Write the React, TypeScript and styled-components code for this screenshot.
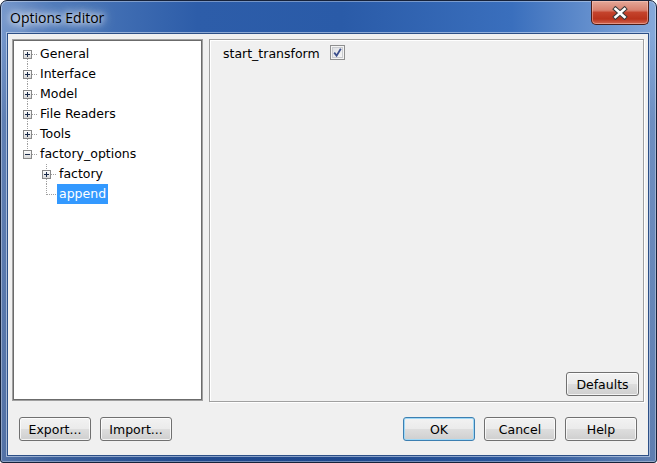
import React from "react";
import styled, { createGlobalStyle } from "styled-components";

const GlobalStyle = createGlobalStyle`
  html, body { margin: 0; padding: 0; background: #ffffff; }
  body { font-family: "DejaVu Sans", Verdana, sans-serif; }
  * { box-sizing: border-box; }
`;

const Window = styled.div`
  width: 657px;
  height: 463px;
  display: flex;
  flex-direction: column;
  border: 1px solid #16223a;
  border-radius: 7px 7px 3px 3px;
  background:
    linear-gradient(to bottom, rgba(8, 30, 80, 0) 0px, rgba(8, 30, 80, 0) 34px, rgba(8, 30, 80, 0.18) 120px, rgba(8, 30, 80, 0.3) 100%),
    linear-gradient(90deg, #7597cb 0%, #4f7aba 8%, #2d5da9 30%, #2a5ba8 52%, #3a6fbd 78%, #86a9da 100%);
  box-shadow: inset 0 0 0 1px rgba(255, 255, 255, 0.35);
  overflow: hidden;
`;

const TitleBar = styled.div`
  height: 33px;
  flex: none;
  display: flex;
  align-items: flex-start;
  justify-content: space-between;
  padding-left: 9px;
`;

const Title = styled.div`
  align-self: center;
  font-family: "Open Sans", "Noto Sans", sans-serif;
  font-size: 14px;
  color: #000;
  text-shadow: 0 0 6px #fff, 0 0 10px #fff, 0 0 16px rgba(255, 255, 255, 0.9);
`;

const CloseButton = styled.div`
  width: 58px;
  height: 24px;
  margin-right: 7px;
  display: flex;
  align-items: center;
  justify-content: center;
  border: 1px solid #4b1d18;
  border-top: none;
  border-radius: 0 0 5px 5px;
  background: linear-gradient(to bottom, #e4a899 0%, #d8806e 40%, #c4432c 50%, #b9321b 78%, #d36650 100%);
  box-shadow: inset 0 0 0 1px rgba(255, 210, 200, 0.45);
`;

const Body = styled.div`
  flex: 1;
  display: flex;
  padding: 0 8px 7px 7px;
`;

const Client = styled.div`
  flex: 1;
  display: flex;
  flex-direction: column;
  background: #f0f0f0;
  box-shadow: 0 0 0 1px #2c4f86, 0 0 0 2px rgba(220, 232, 248, 0.55);
  padding: 5px 4px 0 4px;
`;

const Main = styled.div`
  height: 363px;
  display: flex;
  gap: 6px;
`;

const TreePanel = styled.div`
  width: 191px;
  height: 362px;
  background: #ffffff;
  border: 1px solid #a0a0a0;
  box-shadow: inset 0 0 0 1px #6b6b6b;
  padding: 4px 0 0 1px;
  display: flex;
  flex-direction: column;
`;

const Row = styled.div`
  display: flex;
  height: 20px;
  align-items: center;
`;

const Indent = styled.div`
  width: 19px;
  height: 20px;
  flex: none;
`;

const Joint = styled.svg`
  width: 24px;
  height: 20px;
  flex: none;
  display: block;
`;

const Label = styled.span<{ $selected?: boolean }>`
  height: 20px;
  line-height: 20px;
  padding: 0 2px;
  font-size: 12.5px;
  white-space: nowrap;
  color: ${(p) => (p.$selected ? "#ffffff" : "#000000")};
  background: ${(p) => (p.$selected ? "#3399ff" : "transparent")};
`;

const OptionsPanel = styled.div`
  flex: 1;
  display: flex;
  flex-direction: column;
  justify-content: space-between;
  border: 1px solid #a0a0a0;
  box-shadow: inset 1px 1px 0 #ffffff, 1px 1px 0 #ffffff;
  padding: 3px 4px 5px 13px;
`;

const OptionRow = styled.div`
  display: grid;
  grid-template-columns: 107px auto;
  align-items: center;
  height: 20px;
`;

const OptionLabel = styled.span`
  font-size: 12.5px;
  color: #000;
  white-space: nowrap;
`;

const CheckBox = styled.svg`
  width: 15px;
  height: 15px;
  display: block;
  margin-top: -2px;
`;

const PanelFooter = styled.div`
  display: flex;
  justify-content: flex-end;
`;

const ButtonBar = styled.div`
  flex: 1;
  display: flex;
  justify-content: space-between;
  align-items: flex-start;
  padding: 15px 7px 0 7px;
`;

const ButtonGroup = styled.div`
  display: flex;
  gap: 9px;
`;

const Button = styled.button<{ $default?: boolean; $w?: number }>`
  width: ${(p) => p.$w ?? 72}px;
  height: 24px;
  padding: 0;
  font-family: "DejaVu Sans", Verdana, sans-serif;
  font-size: 12.5px;
  color: #000;
  border: 1px solid ${(p) => (p.$default ? "#3c7fb1" : "#707070")};
  border-radius: 3px;
  background: linear-gradient(to bottom, #f2f2f2 0%, #ebebeb 48%, #dddddd 52%, #cfcfcf 100%);
  box-shadow: inset 0 0 0 1px ${(p) => (p.$default ? "#9fd8f6" : "rgba(255,255,255,0.75)")};
`;

type Node = {
  label: string;
  level: number;
  kind: "plus" | "minus" | "leaf";
  up: boolean;
  down: boolean;
  selected?: boolean;
};

const rows: Node[] = [
  { label: "General", level: 0, kind: "plus", up: false, down: true },
  { label: "Interface", level: 0, kind: "plus", up: true, down: true },
  { label: "Model", level: 0, kind: "plus", up: true, down: true },
  { label: "File Readers", level: 0, kind: "plus", up: true, down: true },
  { label: "Tools", level: 0, kind: "plus", up: true, down: true },
  { label: "factory_options", level: 0, kind: "minus", up: true, down: false },
  { label: "factory", level: 1, kind: "plus", up: true, down: true },
  { label: "append", level: 1, kind: "leaf", up: true, down: false, selected: true },
];

const dot = "#a0a0a0";

function TreeJoint({ kind, up, down }: Node) {
  const hasBox = kind !== "leaf";
  return (
    <Joint viewBox="0 0 24 20">
      {up && (
        <line x1="13.5" y1="0" x2="13.5" y2={hasBox ? 6 : 11} stroke={dot} strokeDasharray="1 1" />
      )}
      {down && <line x1="13.5" y1="15" x2="13.5" y2="20" stroke={dot} strokeDasharray="1 1" />}
      <line x1={hasBox ? 18 : 14} y1="10.5" x2="24" y2="10.5" stroke={dot} strokeDasharray="1 1" />
      {hasBox && (
        <>
          <defs>
            <linearGradient id="exp" x1="0" y1="0" x2="0" y2="1">
              <stop offset="0" stopColor="#ffffff" />
              <stop offset="1" stopColor="#d6d6d6" />
            </linearGradient>
          </defs>
          <rect x="9.5" y="6.5" width="8" height="8" fill="url(#exp)" stroke="#888888" />
          <line x1="11" y1="10.5" x2="16" y2="10.5" stroke="#1a2a48" />
          {kind === "plus" && <line x1="13.5" y1="8" x2="13.5" y2="13" stroke="#1a2a48" />}
        </>
      )}
    </Joint>
  );
}

export default function App() {
  return (
    <>
      <GlobalStyle />
      <Window>
        <TitleBar>
          <Title>Options Editor</Title>
          <CloseButton>
            <svg width="18" height="14" viewBox="0 0 18 14">
              <path d="M4.5 3 L13.5 11 M13.5 3 L4.5 11" stroke="#3a3a3a" strokeWidth="4.6" strokeLinecap="square" />
              <path d="M4.5 3 L13.5 11 M13.5 3 L4.5 11" stroke="#ffffff" strokeWidth="2.6" strokeLinecap="square" />
            </svg>
          </CloseButton>
        </TitleBar>
        <Body>
          <Client>
            <Main>
              <TreePanel>
                {rows.map((r) => (
                  <Row key={r.label}>
                    {Array.from({ length: r.level }).map((_, i) => (
                      <Indent key={i} />
                    ))}
                    <TreeJoint {...r} />
                    <Label $selected={r.selected}>{r.label}</Label>
                  </Row>
                ))}
              </TreePanel>
              <OptionsPanel>
                <OptionRow>
                  <OptionLabel>start_transform</OptionLabel>
                  <CheckBox viewBox="0 0 15 15">
                    <defs>
                      <linearGradient id="cb" x1="0" y1="0" x2="1" y2="1">
                        <stop offset="0" stopColor="#dcdee2" />
                        <stop offset="1" stopColor="#f7f7f7" />
                      </linearGradient>
                    </defs>
                    <rect x="0.5" y="0.5" width="14" height="14" fill="#f4f4f4" stroke="#8e8f8f" />
                    <rect x="2.5" y="2.5" width="10" height="10" fill="url(#cb)" stroke="#c9cbcf" />
                    <path d="M4.2 7.6 L6.6 10.6 L10.8 3.8" fill="none" stroke="#3b4f8c" strokeWidth="1.8" />
                  </CheckBox>
                </OptionRow>
                <PanelFooter>
                  <Button $w={73}>Defaults</Button>
                </PanelFooter>
              </OptionsPanel>
            </Main>
            <ButtonBar>
              <ButtonGroup>
                <Button>Export...</Button>
                <Button>Import...</Button>
              </ButtonGroup>
              <ButtonGroup>
                <Button $default>OK</Button>
                <Button>Cancel</Button>
                <Button>Help</Button>
              </ButtonGroup>
            </ButtonBar>
          </Client>
        </Body>
      </Window>
    </>
  );
}
